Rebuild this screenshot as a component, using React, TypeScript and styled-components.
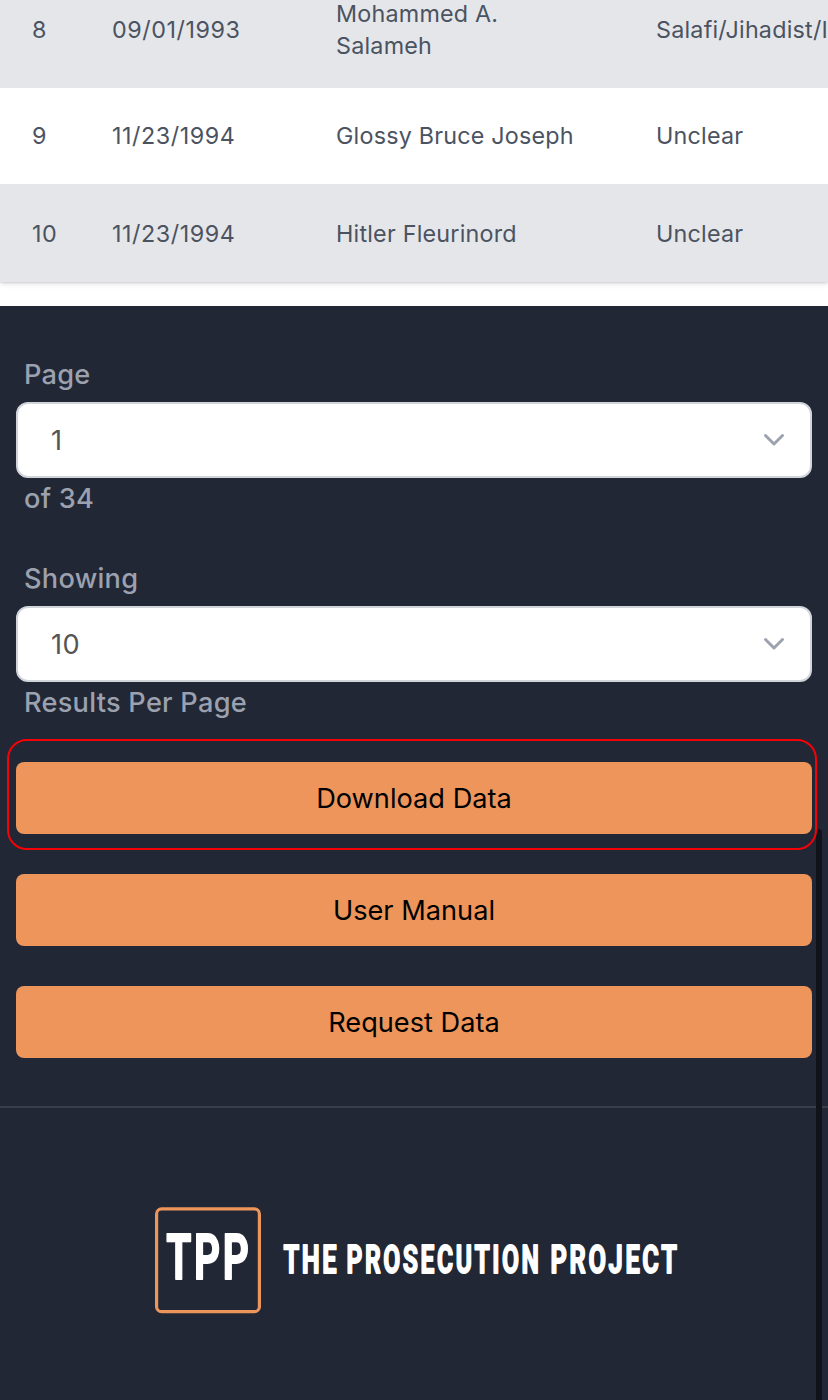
import React from "react";
import styled, { createGlobalStyle } from "styled-components";

const GlobalStyle = createGlobalStyle`
  * { box-sizing: border-box; }
  html, body { margin: 0; padding: 0; }
  body {
    background: #212734;
    font-family: Inter, "Liberation Sans", sans-serif;
    overflow: hidden;
  }
`;

const Page = styled.div`
  position: relative;
  width: 828px;
  height: 1400px;
  overflow: hidden;
  background: #212734;
`;

const TableArea = styled.section`
  display: flex;
  flex-direction: column;
  justify-content: flex-end;
  height: 306px;
  padding-bottom: 24px;
  background: #fff;
  overflow: hidden;
`;

const Table = styled.div`
  flex: none;
  box-shadow: 0 2px 6px rgba(0, 0, 0, 0.1), 0 1px 2px rgba(0, 0, 0, 0.12);
`;

const Row = styled.div<{ $shaded?: boolean; $height: number }>`
  display: grid;
  grid-template-columns: 80px 224px 320px 220px;
  align-items: center;
  width: 844px;
  height: ${(p) => p.$height}px;
  padding-left: 32px;
  background: ${(p) => (p.$shaded ? "#e5e6ea" : "#fff")};
  color: #4b5361;
  font-size: 23.3px;
  line-height: 32px;

  &:last-child {
    padding-top: 1px;
  }
`;

const Cell = styled.div<{ $nowrap?: boolean; $numeric?: boolean }>`
  padding-right: ${(p) => (p.$nowrap ? 0 : 64)}px;
  white-space: ${(p) => (p.$nowrap ? "nowrap" : "normal")};
  letter-spacing: ${(p) => (p.$numeric ? 0.55 : 0.22)}px;
`;

const Controls = styled.section`
  display: flex;
  flex-direction: column;
  height: 802px;
  padding: 48px 16px 0;
  border-bottom: 2px solid #373e4a;
`;

const Field = styled.div`
  display: flex;
  flex-direction: column;
  height: 204px;
`;

const FieldLabel = styled.span`
  height: 40px;
  padding-left: 8px;
  color: #9ba1af;
  font-size: 27.2px;
  font-weight: 450;
  line-height: 41px;
  letter-spacing: 0.25px;
`;

const SelectBox = styled.div`
  display: flex;
  align-items: center;
  justify-content: space-between;
  height: 76px;
  margin: 8px 0 0;
  padding: 0 24px 0 33px;
  background: #fff;
  border: 2px solid #d1d5db;
  border-radius: 12px;
  color: #555;
  font-size: 27.2px;
  line-height: 41px;
  letter-spacing: 0.4px;
`;

const Actions = styled.div`
  display: flex;
  flex-direction: column;
  gap: 40px;
`;

const ActionButton = styled.button`
  position: relative;
  height: 72px;
  padding: 1px 0 0;
  border: 0;
  border-radius: 8px;
  background: #ed955b;
  color: #000;
  font: 400 27.2px/40px Inter, "Liberation Sans", sans-serif;
  letter-spacing: 0;
`;

const Highlight = styled.span`
  position: absolute;
  z-index: 2;
  inset: -23px -5px -16px -9px;
  border: 2px solid #f40207;
  border-radius: 20px;
`;

const ScrollThumb = styled.div`
  position: absolute;
  top: 829px;
  right: 6px;
  width: 6px;
  height: 600px;
  border-radius: 3px;
  background: #10131a;
`;

const Footer = styled.footer`
  display: flex;
  align-items: flex-start;
  padding: 98px 0 0 154px;
`;

const rows = [
  { id: 8, date: "09/01/1993", name: "Mohammed A. Salameh", group: "Salafi/Jihadist/Islamist", height: 116, shaded: true },
  { id: 9, date: "11/23/1994", name: "Glossy Bruce Joseph", group: "Unclear", height: 96, shaded: false },
  { id: 10, date: "11/23/1994", name: "Hitler Fleurinord", group: "Unclear", height: 98, shaded: true },
];

const Chevron = () => (
  <svg width="24" height="16" viewBox="0 0 24 16" fill="none">
    <path d="M3.5 3.5L12 12L20.5 3.5" stroke="#9ca3af" strokeWidth="3" strokeLinecap="round" strokeLinejoin="round" />
  </svg>
);

const LogoWord = styled.text`
  fill: #fff;
  stroke: #fff;
  stroke-width: 1.5px;
  stroke-linejoin: round;
  vector-effect: non-scaling-stroke;
  font-family: Roboto, sans-serif;
  font-weight: 700;
  letter-spacing: 4px;
`;

const words = [
  { text: "TPP", x: 12.3, y: 73.3, size: 62.5, scale: 0.65 },
  { text: "THE", x: 129.4, y: 66.6, size: 38.5, scale: 0.66 },
  { text: "PROSECUTION", x: 192.5, y: 66.6, size: 38.5, scale: 0.64 },
  { text: "PROJECT", x: 396.5, y: 66.6, size: 38.5, scale: 0.66 },
];

const Logo = () => (
  <svg width="540" height="108" viewBox="0 0 540 108">
    <rect x="2.6" y="2.9" width="102.8" height="102.8" rx="5" fill="none" stroke="#ed955b" strokeWidth="3.2" />
    {words.map((w) => (
      <LogoWord key={w.text} fontSize={w.size} transform={`translate(${w.x} ${w.y}) scale(${w.scale} 1)`}>
        {w.text}
      </LogoWord>
    ))}
  </svg>
);

export default function App() {
  return (
    <Page>
      <GlobalStyle />
      <TableArea>
        <Table>
          {rows.map((r) => (
            <Row key={r.id} $shaded={r.shaded} $height={r.height}>
              <Cell $nowrap $numeric>{r.id}</Cell>
              <Cell $nowrap $numeric>{r.date}</Cell>
              <Cell>{r.name}</Cell>
              <Cell $nowrap>{r.group}</Cell>
            </Row>
          ))}
        </Table>
      </TableArea>
      <Controls>
        <Field>
          <FieldLabel>Page</FieldLabel>
          <SelectBox>1<Chevron /></SelectBox>
          <FieldLabel>of 34</FieldLabel>
        </Field>
        <Field>
          <FieldLabel>Showing</FieldLabel>
          <SelectBox>10<Chevron /></SelectBox>
          <FieldLabel>Results Per Page</FieldLabel>
        </Field>
        <Actions>
          <ActionButton>Download Data<Highlight /></ActionButton>
          <ActionButton>User Manual</ActionButton>
          <ActionButton>Request Data</ActionButton>
        </Actions>
      </Controls>
      <Footer>
        <Logo />
      </Footer>
      <ScrollThumb />
    </Page>
  );
}
